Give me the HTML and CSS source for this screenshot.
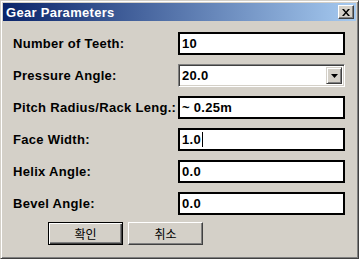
FILE: index.html
```html
<!DOCTYPE html>
<html lang="ko">
<head>
    <meta charset="UTF-8">
    <title>Gear Parameters</title>
    <link rel="stylesheet" href="styles.css">
</head>
<body>
    <div class="window">
        <div class="titlebar">
            <span class="title">Gear Parameters</span>
            <button class="close-btn" aria-label="close">
                <svg width="8" height="7" viewBox="0 0 8 7">
                    <path d="M0 0h2l2 2.5L6 0h2L5 3.5 8 7H6L4 4.5 2 7H0l3-3.5z" fill="#000"/>
                </svg>
            </button>
        </div>
        <div class="content">
            <div class="form">
                <label>Number of Teeth:</label>
                <div class="field">10</div>

                <label>Pressure Angle:</label>
                <div class="combo">
                    <span class="combo-text">20.0</span>
                    <span class="combo-btn">
                        <svg width="7" height="4" viewBox="0 0 7 4"><path d="M0 0h7L3.5 4z" fill="#000"/></svg>
                    </span>
                </div>

                <label>Pitch Radius/Rack Leng.:</label>
                <div class="field">~ 0.25m</div>

                <label>Face Width:</label>
                <div class="field">1.0<span class="caret"></span></div>

                <label>Helix Angle:</label>
                <div class="field">0.0</div>

                <label>Bevel Angle:</label>
                <div class="field">0.0</div>
            </div>
            <div class="buttons">
                <button class="btn default">확인</button>
                <button class="btn">취소</button>
            </div>
        </div>
    </div>
</body>
</html>
```
FILE: styles.css
```css
:root {
    --face: #d4d0c8;
    --shadow: #808080;
    --dark: #404040;
    --light: #fff;
}
body {
    margin: 0;
    background: var(--face);
    font-family: 'Liberation Sans', Arial, sans-serif;
}
.window {
    width: 359px;
    height: 259px;
    box-sizing: border-box;
    padding: 2px;
    background: var(--face);
    border: 1px solid;
    border-color: var(--face) var(--dark) var(--dark) var(--face);
    box-shadow: inset 1px 1px var(--light), inset -1px -1px var(--shadow);
    display: flex;
    flex-direction: column;
}
.titlebar {
    height: 18px;
    background: linear-gradient(to right, #0a246a, #a6caf0);
    display: flex;
    align-items: center;
    justify-content: space-between;
    padding: 0 2px 0 3px;
}
.title {
    color: #fff;
    font-weight: bold;
    font-size: 13px;
    letter-spacing: 0.3px;
}
.close-btn {
    width: 16px;
    height: 14px;
    padding: 0;
    background: var(--face);
    border: 1px solid;
    border-color: var(--light) var(--dark) var(--dark) var(--light);
    box-shadow: inset -1px -1px var(--shadow);
    display: flex;
    align-items: center;
    justify-content: center;
}
.content {
    flex: 1;
    padding: 11px 10px 0 10px;
}
.form {
    display: grid;
    grid-template-columns: 165px 167px;
    grid-auto-rows: 23px;
    row-gap: 9px;
}
.form label {
    font-weight: bold;
    font-size: 13px;
    letter-spacing: 0.3px;
    color: #000;
    align-self: center;
    white-space: nowrap;
}
.field {
    box-sizing: border-box;
    background: #fff;
    border: 2px solid #000;
    padding: 0 2px;
    font-weight: bold;
    font-size: 13px;
    letter-spacing: 0.3px;
    line-height: 17px;
    display: flex;
    align-items: center;
}
.caret {
    display: inline-block;
    width: 1px;
    height: 15px;
    background: #000;
    margin-left: 1px;
}
.combo {
    box-sizing: border-box;
    background: #fff;
    border: 1px solid;
    border-color: var(--shadow) var(--light) var(--light) var(--shadow);
    box-shadow: inset 1px 1px var(--dark), inset -1px -1px var(--face);
    padding: 2px;
    display: flex;
    align-items: center;
    justify-content: space-between;
}
.combo-text {
    font-weight: bold;
    font-size: 13px;
    letter-spacing: 0.3px;
    padding-left: 1px;
}
.combo-btn {
    width: 16px;
    height: 17px;
    box-sizing: border-box;
    background: var(--face);
    border: 1px solid;
    border-color: var(--face) var(--dark) var(--dark) var(--face);
    box-shadow: inset 1px 1px var(--light), inset -1px -1px var(--shadow);
    display: flex;
    align-items: center;
    justify-content: center;
}
.buttons {
    display: flex;
    gap: 5px;
    padding: 7px 0 0 35px;
}
.btn {
    width: 75px;
    height: 23px;
    box-sizing: border-box;
    padding: 0;
    background: var(--face);
    border: 1px solid;
    border-color: var(--light) var(--dark) var(--dark) var(--light);
    box-shadow: inset -1px -1px var(--shadow);
    font-family: 'Noto Sans CJK KR', sans-serif;
    font-size: 12px;
    color: #000;
}
.btn.default {
    border: 1px solid #000;
    box-shadow: inset 1px 1px var(--light), inset -1px -1px var(--dark), inset -2px -2px var(--shadow);
}
```
